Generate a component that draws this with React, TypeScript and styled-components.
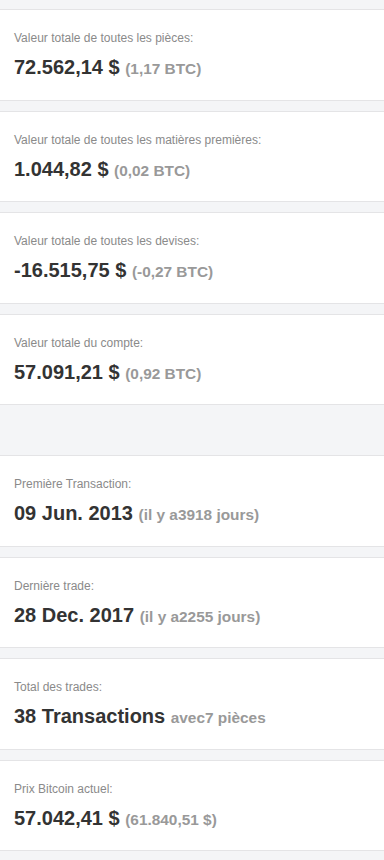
import React from "react";
import styled, { createGlobalStyle } from "styled-components";

const Global = createGlobalStyle`
  html, body { margin: 0; padding: 0; background: #f4f5f7; }
  body { font-family: "Liberation Sans", Arial, sans-serif; }
`;

const Page = styled.div`
  display: flex;
  flex-direction: column;
  gap: 50px;
  padding-top: 9px;
  background: #f4f5f7;
  min-height: 860px;
  box-sizing: border-box;
`;

const Group = styled.div`
  display: flex;
  flex-direction: column;
  gap: 10px;
`;

const Card = styled.div`
  background: #fff;
  border-top: 1px solid #e4e4e6;
  border-bottom: 1px solid #e4e4e6;
  padding: 18px 14px 18.5px;
`;

const Label = styled.div`
  font-size: 12px;
  line-height: 20px;
  color: #8a8a8a;
`;

const Value = styled.div`
  margin-top: 5px;
  font-size: 20px;
  line-height: 28px;
  height: 28px;
  font-weight: bold;
  color: #333;
  white-space: nowrap;
`;

const Sub = styled.span`
  font-size: 15.4px;
  line-height: 1;
  font-weight: bold;
  color: #999;
`;

type Item = { label: string; value: string; sub: string };

const top: Item[] = [
  { label: "Valeur totale de toutes les pièces:", value: "72.562,14 $", sub: "(1,17 BTC)" },
  { label: "Valeur totale de toutes les matières premières:", value: "1.044,82 $", sub: "(0,02 BTC)" },
  { label: "Valeur totale de toutes les devises:", value: "-16.515,75 $", sub: "(-0,27 BTC)" },
  { label: "Valeur totale du compte:", value: "57.091,21 $", sub: "(0,92 BTC)" },
];

const bottom: Item[] = [
  { label: "Première Transaction:", value: "09 Jun. 2013", sub: "(il y a3918 jours)" },
  { label: "Dernière trade:", value: "28 Dec. 2017", sub: "(il y a2255 jours)" },
  { label: "Total des trades:", value: "38 Transactions", sub: "avec7 pièces" },
  { label: "Prix Bitcoin actuel:", value: "57.042,41 $", sub: "(61.840,51 $)" },
];

const Stat = ({ item }: { item: Item }) => (
  <Card>
    <Label>{item.label}</Label>
    <Value>
      {item.value} <Sub>{item.sub}</Sub>
    </Value>
  </Card>
);

export default function App() {
  return (
    <>
      <Global />
      <Page>
        <Group>
          {top.map((it) => (
            <Stat key={it.label} item={it} />
          ))}
        </Group>
        <Group>
          {bottom.map((it) => (
            <Stat key={it.label} item={it} />
          ))}
        </Group>
      </Page>
    </>
  );
}
